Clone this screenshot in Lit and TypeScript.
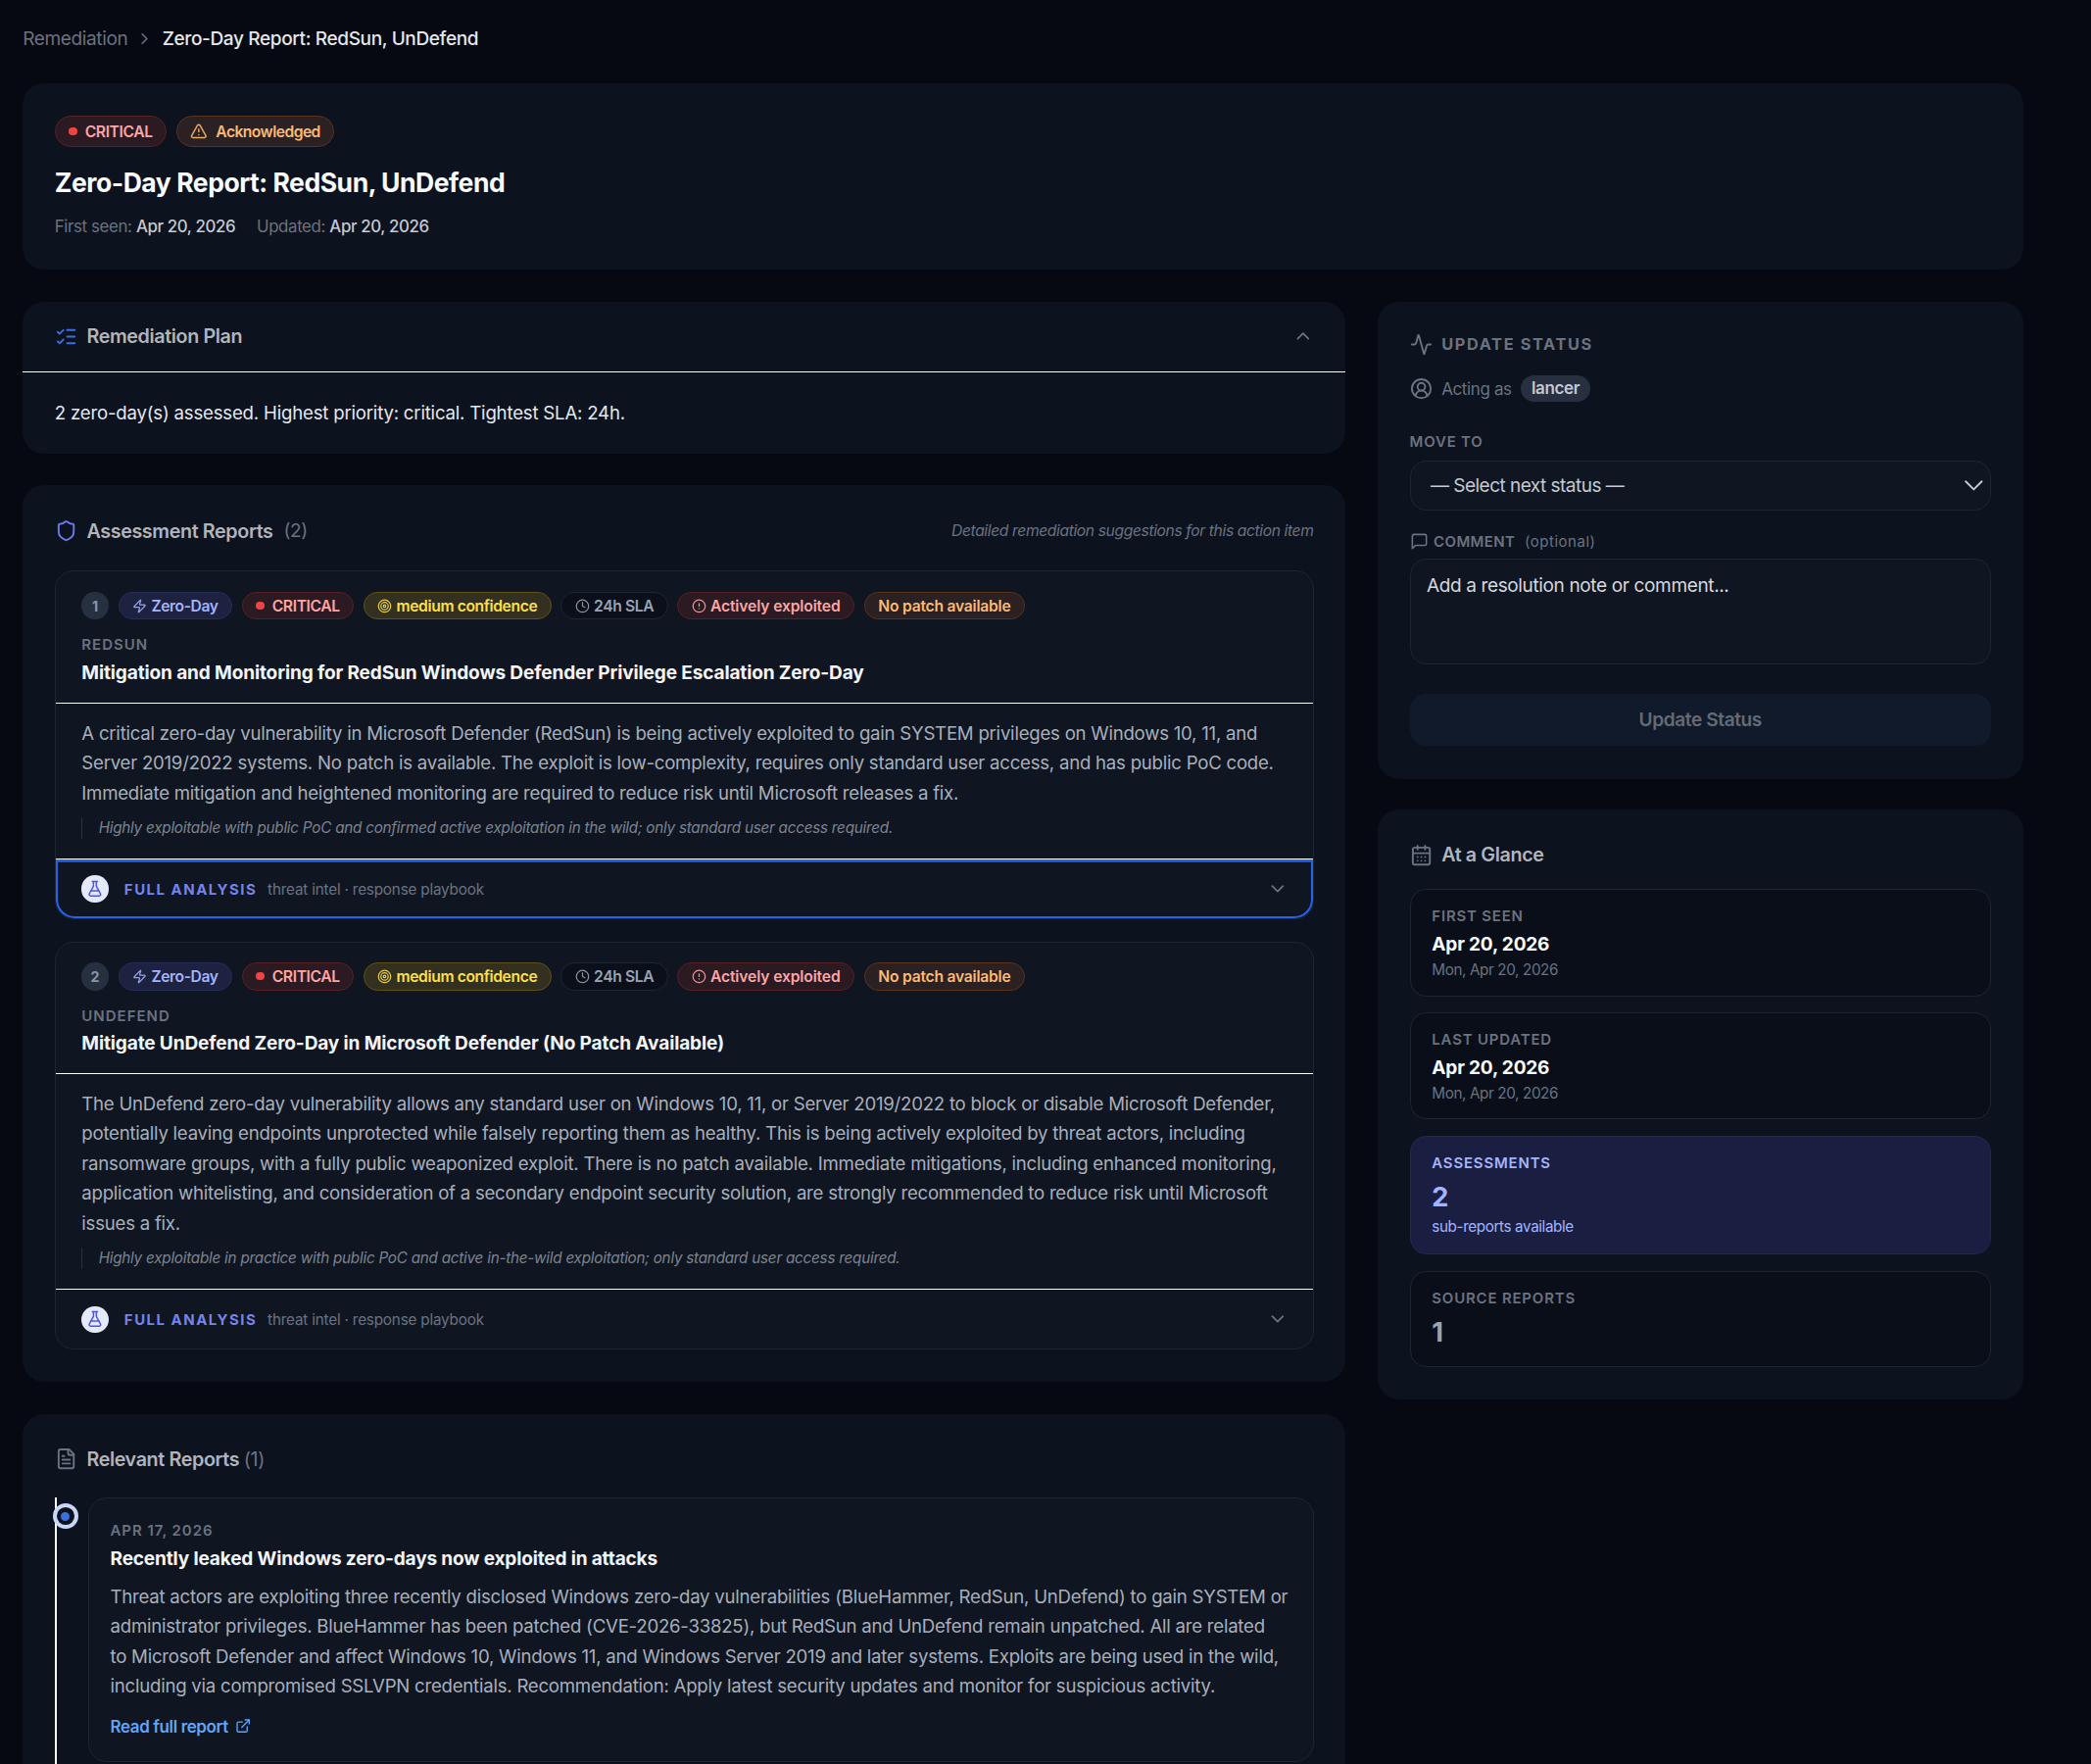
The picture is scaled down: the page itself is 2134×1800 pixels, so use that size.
import { LitElement, html, css, svg } from 'lit';
import { customElement } from 'lit/decorators.js';

const icon = (body: unknown, size = 16, cls = '') => html`<svg class="ic ${cls}" width=${size} height=${size} viewBox="0 0 24 24" fill="none" stroke="currentColor" stroke-width="2" stroke-linecap="round" stroke-linejoin="round">${body}</svg>`;

const I = {
  chevDown: svg`<path d="m6 9 6 6 6-6"/>`,
  chevUp: svg`<path d="m18 15-6-6-6 6"/>`,
  chevRight: svg`<path d="m9 18 6-6-6-6"/>`,
  listChecks: svg`<path d="M13 5h8"/><path d="M13 12h8"/><path d="M13 19h8"/><path d="m3 17 2 2 4-4"/><path d="m3 7 2 2 4-4"/>`,
  shield: svg`<path d="M20 13c0 5-3.5 7.5-7.66 8.95a1 1 0 0 1-.67-.01C7.5 20.5 4 18 4 13V6a1 1 0 0 1 1-1c2 0 4.5-1.2 6.24-2.72a1.17 1.17 0 0 1 1.52 0C14.51 3.81 17 5 19 5a1 1 0 0 1 1 1z"/>`,
  zap: svg`<path d="M4 14a1 1 0 0 1-.78-1.63l9.9-10.2a.5.5 0 0 1 .86.46l-1.92 6.02A1 1 0 0 0 13 10h7a1 1 0 0 1 .78 1.63l-9.9 10.2a.5.5 0 0 1-.86-.46l1.92-6.02A1 1 0 0 0 11 14z"/>`,
  target: svg`<circle cx="12" cy="12" r="10"/><circle cx="12" cy="12" r="6"/><circle cx="12" cy="12" r="2"/>`,
  clock: svg`<circle cx="12" cy="12" r="10"/><path d="M12 6v6l4 2"/>`,
  alert: svg`<circle cx="12" cy="12" r="10"/><path d="M12 8v4"/><path d="M12 16h.01"/>`,
  triangle: svg`<path d="m21.73 18-8-14a2 2 0 0 0-3.48 0l-8 14A2 2 0 0 0 4 21h16a2 2 0 0 0 1.73-3"/><path d="M12 9v4"/><path d="M12 17h.01"/>`,
  flask: svg`<path d="M14 2v6a2 2 0 0 0 .245.96l5.51 10.08A2 2 0 0 1 18 22H6a2 2 0 0 1-1.755-2.96l5.51-10.08A2 2 0 0 0 10 8V2"/><path d="M6.453 15h11.094"/><path d="M8.5 2h7"/>`,
  activity: svg`<path d="M22 12h-2.48a2 2 0 0 0-1.93 1.46l-2.35 8.36a.25.25 0 0 1-.48 0L9.24 2.18a.25.25 0 0 0-.48 0l-2.35 8.36A2 2 0 0 1 4.49 12H2"/>`,
  user: svg`<path d="M18 20a6 6 0 0 0-12 0"/><circle cx="12" cy="10" r="4"/><circle cx="12" cy="12" r="10"/>`,
  message: svg`<path d="M21 15a2 2 0 0 1-2 2H7l-4 4V5a2 2 0 0 1 2-2h14a2 2 0 0 1 2 2z"/>`,
  calendar: svg`<path d="M8 2v4"/><path d="M16 2v4"/><rect width="18" height="18" x="3" y="4" rx="2"/><path d="M3 10h18"/><path d="M8 14h.01"/><path d="M12 14h.01"/><path d="M16 14h.01"/><path d="M8 18h.01"/><path d="M12 18h.01"/><path d="M16 18h.01"/>`,
  file: svg`<path d="M15 2H6a2 2 0 0 0-2 2v16a2 2 0 0 0 2 2h12a2 2 0 0 0 2-2V7Z"/><path d="M14 2v4a2 2 0 0 0 2 2h4"/><path d="M10 9H8"/><path d="M16 13H8"/><path d="M16 17H8"/>`,
  external: svg`<path d="M15 3h6v6"/><path d="M10 14 21 3"/><path d="M18 13v6a2 2 0 0 1-2 2H5a2 2 0 0 1-2-2V8a2 2 0 0 1 2-2h6"/>`,
};

const reports = [
  {
    n: 1,
    label: 'REDSUN',
    title: 'Mitigation and Monitoring for RedSun Windows Defender Privilege Escalation Zero-Day',
    body: 'A critical zero-day vulnerability in Microsoft Defender (RedSun) is being actively exploited to gain SYSTEM privileges on Windows 10, 11, and Server 2019/2022 systems. No patch is available. The exploit is low-complexity, requires only standard user access, and has public PoC code. Immediate mitigation and heightened monitoring are required to reduce risk until Microsoft releases a fix.',
    note: 'Highly exploitable with public PoC and confirmed active exploitation in the wild; only standard user access required.',
    focus: true,
  },
  {
    n: 2,
    label: 'UNDEFEND',
    title: 'Mitigate UnDefend Zero-Day in Microsoft Defender (No Patch Available)',
    body: 'The UnDefend zero-day vulnerability allows any standard user on Windows 10, 11, or Server 2019/2022 to block or disable Microsoft Defender, potentially leaving endpoints unprotected while falsely reporting them as healthy. This is being actively exploited by threat actors, including ransomware groups, with a fully public weaponized exploit. There is no patch available. Immediate mitigations, including enhanced monitoring, application whitelisting, and consideration of a secondary endpoint security solution, are strongly recommended to reduce risk until Microsoft issues a fix.',
    note: 'Highly exploitable in practice with public PoC and active in-the-wild exploitation; only standard user access required.',
    focus: false,
  },
];

@customElement('app-root')
export class AppRoot extends LitElement {
  static styles = css`
    :host {
      display: block;
      zoom: 1.361;
      height: 1322.5px;
      overflow: hidden;
      background: #060912;
      color: #e2e8f0;
      font-family: Inter, 'Liberation Sans', sans-serif;
      font-size: 14px;
      letter-spacing: -0.02em;
    }
    * { box-sizing: border-box; }
    .ic { flex: none; display: block; }

    .page { width: 1517px; padding: 0 0 0 17px; }
    .crumbs {
      height: 62.5px;
      padding-bottom: 4.5px;
      display: flex;
      align-items: center;
      gap: 6px;
      color: #6b7280;
    }
    .crumbs .cur { color: #e5e7eb; font-weight: 500; }
    .crumbs .ic { color: #6b7280; }

    .card { background: #0c121e; border-radius: 16px; }
    .hero { height: 139.5px; padding: 24px; margin-bottom: 24px; }
    .pills { display: flex; align-items: center; gap: 7px; }
    .pill {
      display: inline-flex;
      align-items: center;
      gap: 3px;
      height: 21px;
      padding: 0 10px;
      border-radius: 999px;
      border: 1px solid;
      font-size: 11.5px;
      font-weight: 600;
      white-space: nowrap;
    }
    .pill.big { height: 24px; gap: 6px; }
    .pill.dotted { gap: 6px; }
    .pill.loose { letter-spacing: -0.1px; }
    .pill.snug { letter-spacing: -0.17px; }
    .pill.tight { letter-spacing: -0.4px; }
    .dot { width: 6px; height: 6px; border-radius: 50%; background: #ef4444; }
    .red { background: #2c1a22; border-color: #59211f; color: #fca5a5; }
    .orange { background: #2b2022; border-color: #5c3218; color: #fdba74; }
    .indigo { background: #1c2240; border-color: #262d58; color: #a5b4fc; }
    .yellow { background: #33301f; border-color: #5f5215; color: #fde047; }
    .gray { background: #0a0f1a; border-color: #1e2533; color: #9ca3af; }
    .red .ic, .orange .ic, .yellow .ic, .gray .ic, .indigo .ic { opacity: 0.9; }
    h1 { margin: 12.5px 0 0; font-size: 19.5px; line-height: 28px; font-weight: 700; color: #f8fafc; letter-spacing: -0.34px; }
    .meta { margin-top: 10px; display: flex; gap: 16px; font-size: 12.4px; line-height: 18px; color: #6b7280; }
    .meta b { font-weight: 500; color: #c4c9d2; }

    .cols { display: grid; grid-template-columns: 992px 484px; gap: 24px; align-items: start; }
    .col { display: flex; flex-direction: column; gap: 24px; }

    .plan-head { height: 53px; padding: 0 24px; display: flex; align-items: center; gap: 7px; border-bottom: 1px solid #fff; }
    .sec-title { font-size: 14.5px; font-weight: 600; color: #b0b5bd; }
    .plan-icon { color: #3b6fe0; }
    .plan-head .toggle { margin-left: auto; color: #6b7280; }
    .plan-body { padding: 20px 24px 20px; height: 61px; font-size: 13.7px; line-height: 22px; color: #e2e8f0; letter-spacing: -0.15px; }

    .section { padding: 24px; }
    .sec-head { display: flex; align-items: center; gap: 7px; height: 20px; margin-bottom: 20px; }
    .sec-head.tight { margin-bottom: 19px; }
    .sec-head .count { color: #6b7280; font-weight: 400; margin-left: 1px; }
    .sec-title .count { color: #6b7280; font-weight: 400; margin-left: 0; }
    .sec-head .hint { margin-left: auto; font-size: 11.5px; font-style: italic; color: #6b7280; }
    .shield { color: #6b7ae8; }
    .file-icon { color: #6b7280; }

    .report { background: #0f1622; border: 1px solid #1e2533; border-radius: 14px; overflow: hidden; }
    .report + .report { margin-top: 16.5px; }
    .rep-top { padding: 15px 19.5px 11px; border-bottom: 1px solid #fff; }
    .rep-top .num { margin-right: 0.5px; }
    .num {
      width: 20px;
      height: 21px;
      border-radius: 50%;
      background: #263040;
      color: #8b95a5;
      font-size: 10.5px;
      font-weight: 700;
      display: flex;
      align-items: center;
      justify-content: center;
    }
    .rep-label { margin-top: 11px; font-size: 11px; line-height: 16px; font-weight: 600; letter-spacing: 0.75px; color: #6b7280; }
    .rep-title { margin-top: 2px; font-size: 14px; line-height: 22px; font-weight: 700; color: #f3f4f6; letter-spacing: -0.1px; }
    .rep-body { padding: 11px 19.5px 15px; }
    .rep-body p { margin: 0; font-size: 13.7px; line-height: 22.4px; color: #a8afba; letter-spacing: -0.18px; }
    .note {
      margin-top: 7px;
      padding-left: 12px;
      border-left: 1px solid #2a3140;
      font-size: 11.2px;
      line-height: 16px;
      font-style: italic;
      color: #7d838e;
      letter-spacing: -0.17px;
    }
    .analysis {
      height: 45px;
      padding: 0 19.5px;
      display: flex;
      align-items: center;
      border-top: 1px solid #fff;
    }
    .analysis.focus { box-shadow: inset 0 2px 0 #2563eb, inset 0 0 0 1.5px #2563eb; border-bottom-left-radius: 14px; border-bottom-right-radius: 14px; }
    .flask { width: 20px; height: 20px; border-radius: 50%; background: #e4e9fb; color: #4f55e0; display: flex; align-items: center; justify-content: center; }
    .an-label { margin-left: 12px; font-size: 11px; font-weight: 700; letter-spacing: 1.1px; color: #7683e8; }
    .an-sub { margin-left: 8px; font-size: 11.2px; color: #6b7280; letter-spacing: -0.13px; }
    .analysis .toggle { margin-left: auto; margin-right: -1px; color: #6b7280; }

    .timeline { position: relative; padding: 0 0 16px 23.5px; border-left: 1.5px solid #fff; }
    .tl-dot {
      position: absolute;
      left: -3px;
      top: 4.5px;
      width: 19px;
      height: 19px;
      border-radius: 50%;
      background: #0c121e;
      border: 3px solid #c9d6f7;
      display: flex;
      align-items: center;
      justify-content: center;
    }
    .tl-dot i { width: 7px; height: 7px; border-radius: 50%; background: #3b6fe0; }
    .tl-card { background: #0f1622; border: 1px solid #1e2533; border-radius: 14px; padding: 16px 16px 16px; }
    .tl-date { font-size: 11px; line-height: 16px; font-weight: 600; letter-spacing: 0.7px; color: #6b7280; }
    .tl-title { margin-top: 2px; font-size: 14px; line-height: 22px; font-weight: 700; color: #f3f4f6; letter-spacing: -0.12px; }
    .tl-card p { margin: 6px 0 0; font-size: 13.7px; line-height: 22.4px; color: #a8afba; letter-spacing: -0.18px; }
    .link { margin-top: 9px; display: flex; align-items: center; gap: 5px; height: 20px; font-size: 12.5px; font-weight: 600; color: #60a5fa; }

    .side { padding: 24px 24px 25px; }
    .up-title { height: 18px; margin-top: -1px; display: flex; align-items: center; gap: 7px; font-size: 12px; font-weight: 700; letter-spacing: 1.2px; color: #6b7280; }
    .acting { margin-top: 14.5px; height: 20px; display: flex; align-items: center; gap: 7px; font-size: 12.5px; color: #6b7280; }
    .acting .who { background: #263040; color: #c4c9d2; font-weight: 600; height: 20px; line-height: 20px; padding: 0 8px; border-radius: 999px; }
    .field-label { font-size: 11px; line-height: 16px; font-weight: 600; letter-spacing: 0.6px; color: #6b7280; }
    .move-label { margin-top: 21.5px; }
    .select {
      margin-top: 6px;
      height: 38px;
      border: 1px solid #1e2533;
      border-radius: 12px;
      background: #0f1622;
      padding: 0 0 0 15px;
      display: flex;
      align-items: center;
      justify-content: space-between;
      color: #c4c9d2;
      letter-spacing: -0.4px;
    }
    .select .ic { stroke-width: 1.4; }
    .comment-label { margin-top: 15px; display: flex; align-items: center; gap: 4px; letter-spacing: 0.3px; }
    .comment-label span { font-weight: 400; letter-spacing: 0.4px; margin-left: 3px; }
    textarea {
      display: block;
      width: 100%;
      height: 79px;
      margin-top: 5px;
      padding: 11px 12px;
      border: 1px solid #1e2533;
      border-radius: 12px;
      background: #0f1622;
      resize: none;
      outline: none;
      font: inherit;
      letter-spacing: inherit;
      line-height: 17px;
      color: #e2e8f0;
    }
    textarea::placeholder { color: #d5d8de; opacity: 1; }
    .submit {
      display: block;
      width: 100%;
      height: 39px;
      margin-top: 22px;
      border: 0;
      border-radius: 12px;
      background: #111a2b;
      color: #646a75;
      font: inherit;
      letter-spacing: inherit;
      font-weight: 600;
    }

    .glance { padding: 24px; margin-top: -1px; }
    .gl-title { height: 20px; display: flex; align-items: center; gap: 7px; font-size: 14.5px; font-weight: 600; color: #b0b5bd; margin-bottom: 15.5px; }
    .gl-title .ic { color: #6b7280; }
    .gl-list { display: flex; flex-direction: column; gap: 12px; }
    .gl { background: #090e19; border: 1px solid #1e2533; border-radius: 12px; padding: 12px 16px 11px; }
    .gl.hl { background: #1a1f42; border-color: #232850; padding-bottom: 12px; }
    .gl-k { font-size: 11px; line-height: 16px; font-weight: 600; letter-spacing: 0.6px; color: #6b7280; }
    .gl-v { margin-top: 2px; font-size: 14px; line-height: 22px; font-weight: 700; color: #f8fafc; letter-spacing: -0.14px; }
    .gl-s { font-size: 11.2px; line-height: 16px; color: #6b7280; }
    .gl-n { margin-top: 4px; font-size: 20px; line-height: 28px; font-weight: 700; color: #9ca3af; }
    .gl.hl .gl-k, .gl.hl .gl-n { color: #a5b4fc; }
    .gl.hl .gl-s { color: #a5b4fc; }
  `;

  renderReport(r: (typeof reports)[number]) {
    return html`<article class="report">
      <div class="rep-top">
        <div class="pills">
          <div class="num">${r.n}</div>
          <span class="pill indigo">${icon(I.zap, 11)}Zero-Day</span>
          <span class="pill dotted red"><span class="dot"></span>CRITICAL</span>
          <span class="pill yellow">${icon(I.target, 11)}medium confidence</span>
          <span class="pill gray">${icon(I.clock, 11)}24h SLA</span>
          <span class="pill loose red">${icon(I.alert, 11)}Actively exploited</span>
          <span class="pill snug orange">No patch available</span>
        </div>
        <div class="rep-label">${r.label}</div>
        <div class="rep-title">${r.title}</div>
      </div>
      <div class="rep-body">
        <p>${r.body}</p>
        <div class="note">${r.note}</div>
      </div>
      <div class="analysis ${r.focus ? 'focus' : ''}">
        <span class="flask">${icon(I.flask, 13)}</span>
        <span class="an-label">FULL ANALYSIS</span>
        <span class="an-sub">threat intel · response playbook</span>
        <span class="toggle">${icon(I.chevDown, 16)}</span>
      </div>
    </article>`;
  }

  render() {
    return html`<div class="page">
      <nav class="crumbs">
        <span>Remediation</span>
        ${icon(I.chevRight, 14)}
        <span class="cur">Zero-Day Report: RedSun, UnDefend</span>
      </nav>

      <header class="card hero">
        <div class="pills">
          <span class="pill big red"><span class="dot"></span>CRITICAL</span>
          <span class="pill big tight orange">${icon(I.triangle, 13)}Acknowledged</span>
        </div>
        <h1>Zero-Day Report: RedSun, UnDefend</h1>
        <div class="meta">
          <span>First seen: <b>Apr 20, 2026</b></span>
          <span>Updated: <b>Apr 20, 2026</b></span>
        </div>
      </header>

      <div class="cols">
        <div class="col">
          <section class="card">
            <div class="plan-head">
              <span class="plan-icon">${icon(I.listChecks, 17)}</span>
              <span class="sec-title">Remediation Plan</span>
              <span class="toggle">${icon(I.chevUp, 16)}</span>
            </div>
            <div class="plan-body">2 zero-day(s) assessed. Highest priority: critical. Tightest SLA: 24h.</div>
          </section>

          <section class="card section">
            <div class="sec-head">
              <span class="shield">${icon(I.shield, 17)}</span>
              <span class="sec-title">Assessment Reports</span>
              <span class="count">(2)</span>
              <span class="hint">Detailed remediation suggestions for this action item</span>
            </div>
            ${reports.map(r => this.renderReport(r))}
          </section>

          <section class="card section">
            <div class="sec-head tight">
              <span class="file-icon">${icon(I.file, 17)}</span>
              <span class="sec-title">Relevant Reports <span class="count">(1)</span></span>
            </div>
            <div class="timeline">
              <span class="tl-dot"><i></i></span>
              <div class="tl-card">
                <div class="tl-date">APR 17, 2026</div>
                <div class="tl-title">Recently leaked Windows zero-days now exploited in attacks</div>
                <p>Threat actors are exploiting three recently disclosed Windows zero-day vulnerabilities (BlueHammer, RedSun, UnDefend) to gain SYSTEM or administrator privileges. BlueHammer has been patched (CVE-2026-33825), but RedSun and UnDefend remain unpatched. All are related to&nbsp;Microsoft Defender and affect Windows 10, Windows 11, and Windows Server 2019 and later systems. Exploits are being used in the wild, including via compromised SSLVPN credentials. Recommendation: Apply latest security updates and monitor for suspicious activity.</p>
                <div class="link">Read full report ${icon(I.external, 12)}</div>
              </div>
            </div>
          </section>
        </div>

        <div class="col">
          <section class="card side">
            <div class="up-title">${icon(I.activity, 17)}UPDATE STATUS</div>
            <div class="acting">${icon(I.user, 17)}Acting as <span class="who">lancer</span></div>
            <div class="field-label move-label">MOVE TO</div>
            <div class="select">— Select next status —${icon(I.chevDown, 24)}</div>
            <div class="field-label comment-label">${icon(I.message, 14)}COMMENT <span>(optional)</span></div>
            <textarea placeholder="Add a resolution note or comment..."></textarea>
            <button class="submit">Update Status</button>
          </section>

          <section class="card glance">
            <div class="gl-title">${icon(I.calendar, 17)}At a Glance</div>
            <div class="gl-list">
              <div class="gl"><div class="gl-k">FIRST SEEN</div><div class="gl-v">Apr 20, 2026</div><div class="gl-s">Mon, Apr 20, 2026</div></div>
              <div class="gl"><div class="gl-k">LAST UPDATED</div><div class="gl-v">Apr 20, 2026</div><div class="gl-s">Mon, Apr 20, 2026</div></div>
              <div class="gl hl"><div class="gl-k">ASSESSMENTS</div><div class="gl-n">2</div><div class="gl-s">sub-reports available</div></div>
              <div class="gl"><div class="gl-k">SOURCE REPORTS</div><div class="gl-n">1</div></div>
            </div>
          </section>
        </div>
      </div>
    </div>`;
  }
}
